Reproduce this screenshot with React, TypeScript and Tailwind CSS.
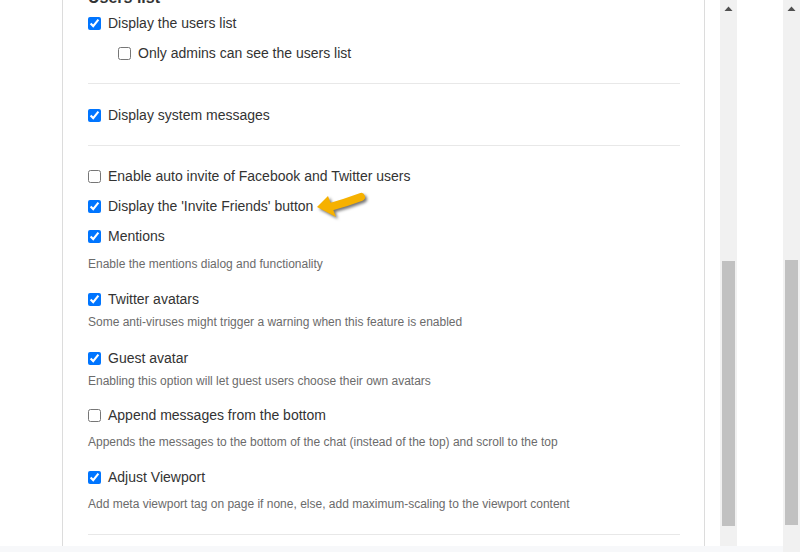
import React from "react";

type Opt = {
  label: string;
  checked: boolean;
  desc?: string;
  mt: string;
  descMt?: string;
  arrow?: boolean;
};

const options: Opt[] = [
  { label: "Enable auto invite of Facebook and Twitter users", checked: false, mt: "mt-[20px]" },
  { label: "Display the 'Invite Friends' button", checked: true, mt: "mt-[10px]", arrow: true },
  { label: "Mentions", checked: true, mt: "mt-[10px]", desc: "Enable the mentions dialog and functionality", descMt: "mt-[10px]" },
  { label: "Twitter avatars", checked: true, mt: "mt-[17px]", desc: "Some anti-viruses might trigger a warning when this feature is enabled", descMt: "mt-[5px]" },
  { label: "Guest avatar", checked: true, mt: "mt-[18px]", desc: "Enabling this option will let guest users choose their own avatars", descMt: "mt-[5px]" },
  { label: "Append messages from the bottom", checked: false, mt: "mt-[16px]", desc: "Appends the messages to the bottom of the chat (instead of the top) and scroll to the top", descMt: "mt-[9px]" },
  { label: "Adjust Viewport", checked: true, mt: "mt-[17px]", desc: "Add meta viewport tag on page if none, else, add maximum-scaling to the viewport content", descMt: "mt-[9px]" },
];

const Arrow = () => (
  <svg width="54" height="30" viewBox="0 0 54 30" className="ml-[2px] -mt-[5px]" style={{ filter: "drop-shadow(2px 2px 1.5px rgba(0,0,0,0.55))" }}>
    <path d="M15 18 Q30 14 46 8" fill="none" stroke="#f6b100" strokeWidth="8" strokeLinecap="round" />
    <polygon points="2,18 13,7 21,28" fill="#f6b100" />
  </svg>
);

const Check = ({ label, checked, arrow }: { label: string; checked: boolean; arrow?: boolean }) => (
  <label className="flex items-center h-[20px]">
    <input type="checkbox" defaultChecked={checked} className="m-0 w-[13px] h-[13px]" />
    <span className="ml-[7px] text-[14px] text-[#333]">{label}</span>
    {arrow && <Arrow />}
  </label>
);

const Scrollbar = ({ h, thumbTop, thumbH }: { h: string; thumbTop: string; thumbH: string }) => (
  <div className={`w-[17px] ${h} bg-[#f1f1f1] flex flex-col items-center shrink-0`}>
    <svg width="9" height="6" viewBox="0 0 9 6" className="mt-[6px]">
      <polygon points="4.5,0.5 8.5,5 0.5,5" fill="#505050" />
    </svg>
    <div className={`w-[13px] ${thumbTop} ${thumbH} bg-[#c1c1c1]`} />
  </div>
);

export default function App() {
  return (
    <div className="w-[800px] h-[552px] overflow-hidden flex bg-white" style={{ fontFamily: '"Liberation Sans", Arial, sans-serif' }}>
      <div className="w-[783px] flex flex-col">
        <div className="flex h-[546px]">
          <div className="w-[62px] shrink-0" />
          <div className="w-[643px] border-l border-r border-[#dcdcdc] pl-[25px] pr-[24px] overflow-hidden">
            <div className="-mt-[12px] h-[20px] text-[16px] font-bold text-[#333] leading-[20px]">Users list</div>
            <div className="mt-[5px]">
              <Check label="Display the users list" checked />
            </div>
            <div className="mt-[10px] pl-[30px]">
              <Check label="Only admins can see the users list" checked={false} />
            </div>
            <hr className="mt-[20px] border-t border-[#e8e8e8]" />
            <div className="mt-[21px]">
              <Check label="Display system messages" checked />
            </div>
            <hr className="mt-[20px] border-t border-[#e8e8e8]" />
            {options.map((o) => (
              <div key={o.label}>
                <div className={o.mt}>
                  <Check label={o.label} checked={o.checked} arrow={o.arrow} />
                </div>
                {o.desc && (
                  <p className={`${o.descMt} h-[16px] leading-[16px] text-[12px] text-[#6b6b6b]`}>{o.desc}</p>
                )}
              </div>
            ))}
            <hr className="mt-[22px] border-t border-[#e8e8e8]" />
          </div>
          <div className="w-[15px] shrink-0" />
          <Scrollbar h="h-[546px]" thumbTop="mt-[249px]" thumbH="h-[265px]" />
          <div className="flex-1" />
        </div>
        <div className="h-[6px] bg-[#f7f8fa]" />
      </div>
      <Scrollbar h="h-[552px]" thumbTop="mt-[248px]" thumbH="h-[265px]" />
    </div>
  );
}
